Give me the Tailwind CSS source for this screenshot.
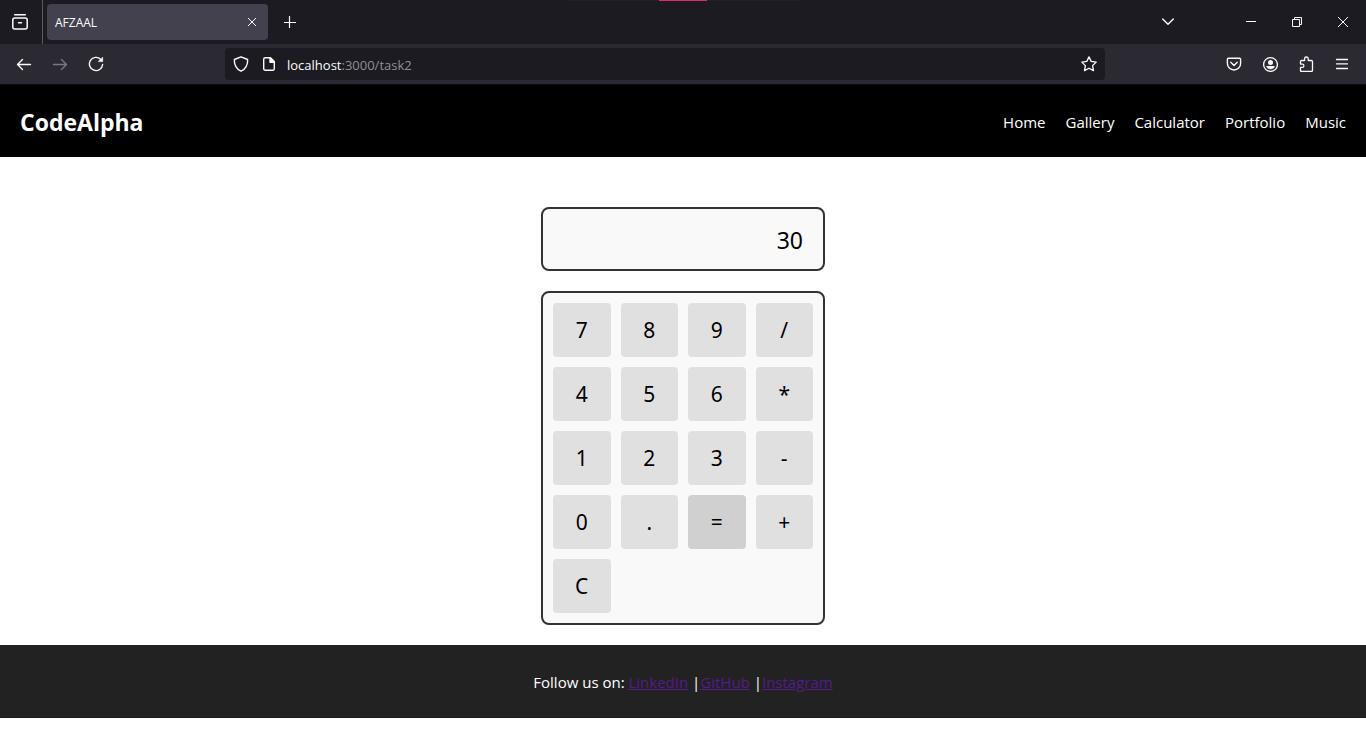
<!DOCTYPE html>
<html lang="en">
<head>
<meta charset="utf-8">
<meta name="viewport" content="width=device-width, initial-scale=1">
<title>AFZAAL</title>
<script src="https://cdn.jsdelivr.net/npm/@tailwindcss/browser@4"></script>
</head>
<body class="min-h-screen bg-white font-['Open_Sans','Noto_Sans',sans-serif] text-black">

<!-- Browser tab strip -->
<div class="relative flex h-11 items-center bg-[#1c1b22] text-[#fbfbfe]">
  <div class="absolute top-0 left-1/2 flex h-px w-[230px] -translate-x-1/2 justify-center bg-[#222222]"><div class="h-px w-12 bg-[#d92b77]"></div></div>
  <button aria-label="Recent browsing" class="flex h-11 w-[43px] items-center justify-center border-r border-[#5b5a62] pr-0.5">
    <svg class="size-4" viewBox="0 0 16 16" fill="none" stroke="currentColor" stroke-width="1.5" stroke-linecap="round"><path d="M2.7 .8h10.6"/><rect x=".8" y="4" width="14.4" height="11" rx="2"/><path d="M6.5 8.7h3"/></svg>
  </button>
  <div class="ml-1 flex h-9 w-[221px] items-center justify-between rounded bg-[#42414d] px-2">
    <span class="pt-0.5 text-xs">AFZAAL</span>
    <button aria-label="Close tab" class="flex size-4 items-center justify-center"><svg class="size-2" viewBox="0 0 8 8" stroke="currentColor" fill="none" stroke-linecap="round"><path d="M.3.3l7.4 7.4M7.7.3L.3 7.7"/></svg></button>
  </div>
  <button aria-label="New tab" class="ml-3 flex size-5 items-center justify-center"><svg class="size-3" viewBox="0 0 12 12" stroke="currentColor" stroke-width="1.2" fill="none" stroke-linecap="round"><path d="M5.5 .5v11M.5 6.5h11"/></svg></button>
  <div class="ml-auto flex items-center">
    <button aria-label="List all tabs" class="mr-9 flex h-11 w-12 items-center justify-center"><svg class="h-2 w-3" viewBox="0 0 12 8" stroke="currentColor" stroke-width="1.4" fill="none" stroke-linecap="round" stroke-linejoin="round"><path d="M.7 1L6 6.3 11.3 1"/></svg></button>
    <button aria-label="Minimize" class="flex h-11 w-[46px] items-center justify-center"><svg class="size-[10px]" viewBox="0 0 10 10" stroke="currentColor" fill="none"><path d="M0 4.5h10"/></svg></button>
    <button aria-label="Restore" class="flex h-11 w-[46px] items-center justify-center"><svg class="size-[10px]" viewBox="0 0 10 10" stroke="currentColor" fill="none"><path d="M.5 2.5h7v7h-7zM2.5 2.5v-2h7v7h-2"/></svg></button>
    <button aria-label="Close window" class="flex h-11 w-[46px] items-center justify-center"><svg class="size-[10px]" viewBox="0 0 10 10" stroke="currentColor" fill="none"><path d="M0 0l10 10M10 0L0 10"/></svg></button>
  </div>
</div>

<!-- Navigation toolbar -->
<div class="flex h-[41px] items-center border-b border-[#0c0c0d] bg-[#2b2a33] text-[#fbfbfe]">
  <div class="flex w-[225px] shrink-0 items-center gap-5 pl-4">
    <button aria-label="Back"><svg class="size-4" viewBox="0 0 16 16" fill="none" stroke="currentColor" stroke-width="1.4" stroke-linecap="round" stroke-linejoin="round"><path d="M14.5 8.5h-13M6.5 3.5l-5 5 5 5"/></svg></button>
    <button aria-label="Forward" class="text-[#797880]"><svg class="size-4" viewBox="0 0 16 16" fill="none" stroke="currentColor" stroke-width="1.4" stroke-linecap="round" stroke-linejoin="round"><path d="M1.5 8.5h13M9.5 3.5l5 5-5 5"/></svg></button>
    <button aria-label="Reload"><svg class="size-4" viewBox="0 0 16 16" fill="none" stroke="currentColor" stroke-width="1.4" stroke-linecap="round" stroke-linejoin="round"><path d="M12.8 3.4A6.6 6.6 0 1 0 14.6 8.5"/><path d="M14.7 1.4v4.2H10.5z" fill="currentColor" stroke-width=".6"/></svg></button>
  </div>
  <div class="flex h-8 min-w-0 flex-1 items-center rounded bg-[#1c1b22] px-2">
    <button aria-label="Site protection"><svg class="size-4" viewBox="0 0 16 16" fill="none" stroke="currentColor" stroke-width="1.4" stroke-linejoin="round"><path d="M8 .8L14.6 3.5C15.1 8.2 12.7 13.3 8 15.2 3.3 13.3.9 8.2 1.4 3.5z"/></svg></button>
    <button aria-label="Site information" class="ml-3"><svg class="size-4" viewBox="0 0 16 16" fill="none" stroke="currentColor" stroke-width="1.4" stroke-linejoin="round"><path d="M9.5 1.8H4.2a1.5 1.5 0 0 0-1.5 1.5v9.4a1.5 1.5 0 0 0 1.5 1.5h7.6a1.5 1.5 0 0 0 1.5-1.5V5.6z"/><path d="M9 1.8v4.4h4.3z" fill="currentColor"/></svg></button>
    <a href="#" class="ml-[10px] flex-1 pt-[3px] text-[13px] text-[#8f8f96]"><span class="text-[#fbfbfe]">localhost</span>:3000/task2</a>
    <button aria-label="Bookmark this page"><svg class="size-4" viewBox="0 0 16 16" fill="none" stroke="currentColor" stroke-width="1.3" stroke-linejoin="round"><path d="M8 .9l2.2 4.5 5 .7-3.6 3.5.9 5L8 12.2l-4.5 2.4.9-5L.8 6.1l5-.7z"/></svg></button>
  </div>
  <div class="flex w-[261px] shrink-0 items-center justify-end gap-5 pr-4">
    <button aria-label="Save to Pocket"><svg class="size-4" viewBox="0 0 16 16" fill="none" stroke="currentColor" stroke-width="1.4" stroke-linecap="round" stroke-linejoin="round"><path d="M2.4 2.3h11.2a1 1 0 0 1 1 1v4.1a6.6 6.6 0 0 1-13.2 0V3.3a1 1 0 0 1 1-1z"/><path d="M4.8 6.3L8 9.4l3.2-3.1"/></svg></button>
    <button aria-label="Account"><svg class="size-4" viewBox="0 0 16 16" fill="none" stroke="currentColor" stroke-width="1.3"><circle cx="8.5" cy="8.5" r="6.9"/><circle cx="8.5" cy="6.5" r="2.5" fill="currentColor" stroke="none"/><path d="M4.3 10h8.4c0 2-1.8 3.2-4.2 3.2S4.3 12 4.3 10z" fill="currentColor" stroke="none"/></svg></button>
    <button aria-label="Extensions"><svg class="size-4" viewBox="0 0 16 16" fill="none" stroke="currentColor" stroke-width="1.3" stroke-linejoin="round"><path d="M6.6 4.5V2.8a1.8 1.8 0 0 1 3.6 0v1.7h3.1a1.2 1.2 0 0 1 1.2 1.2v8.6a1.2 1.2 0 0 1-1.2 1.2H3.5a1 1 0 0 1-1-1v-3.2h1.8a1.6 1.6 0 0 0 0-3.2H2.5V5.5a1 1 0 0 1 1-1z"/></svg></button>
    <button aria-label="Application menu"><svg class="size-4" viewBox="0 0 16 16" fill="none" stroke="currentColor" stroke-width="1.3" stroke-linecap="round"><path d="M2.5 3.5h11M2.5 7.8h11M2.5 12.5h11"/></svg></button>
  </div>
</div>

<header class="flex h-[72px] items-center justify-between bg-black px-5 pt-[3px] text-white">
  <h1 class="text-[23px] font-bold">CodeAlpha</h1>
  <nav class="flex gap-5 text-[15px]">
    <a href="#">Home</a>
    <a href="#">Gallery</a>
    <a href="#">Calculator</a>
    <a href="#">Portfolio</a>
    <a href="#">Music</a>
  </nav>
</header>

<main class="mx-auto flex w-[284px] flex-col gap-5 pt-[50px] pb-5">
  <input type="text" aria-label="Result" value="30" readonly class="h-16 w-full rounded-lg border-2 border-[#333] bg-[#f9f9f9] px-5 pt-0.5 text-right font-['Noto_Sans',sans-serif] text-[23px] outline-none">
  <div class="grid grid-cols-4 gap-[10px] rounded-lg border-2 border-[#333] bg-[#f9f9f9] p-[10px] font-['Noto_Sans',sans-serif] text-[21px] *:h-[54px] *:rounded *:pt-0.5">
    <button class="bg-[#e0e0e0]">7</button>
    <button class="bg-[#e0e0e0]">8</button>
    <button class="bg-[#e0e0e0]">9</button>
    <button class="bg-[#e0e0e0]">/</button>
    <button class="bg-[#e0e0e0]">4</button>
    <button class="bg-[#e0e0e0]">5</button>
    <button class="bg-[#e0e0e0]">6</button>
    <button class="bg-[#e0e0e0]">*</button>
    <button class="bg-[#e0e0e0]">1</button>
    <button class="bg-[#e0e0e0]">2</button>
    <button class="bg-[#e0e0e0]">3</button>
    <button class="bg-[#e0e0e0]">-</button>
    <button class="bg-[#e0e0e0]">0</button>
    <button class="bg-[#e0e0e0]">.</button>
    <button class="bg-[#d0d0d0]">=</button>
    <button class="bg-[#e0e0e0]">+</button>
    <button class="bg-[#e0e0e0]">C</button>
  </div>
</main>

<footer class="border-b border-[#1c1b22] bg-[#222] pt-[26px] pb-[23px] text-center text-[15px] text-white">
  <p>Follow us on: <a href="#" class="text-[#551a8b] underline">LinkedIn</a> |<a href="#" class="text-[#551a8b] underline">GitHub</a> |<a href="#" class="text-[#551a8b] underline">Instagram</a></p>
</footer>

</body>
</html>
